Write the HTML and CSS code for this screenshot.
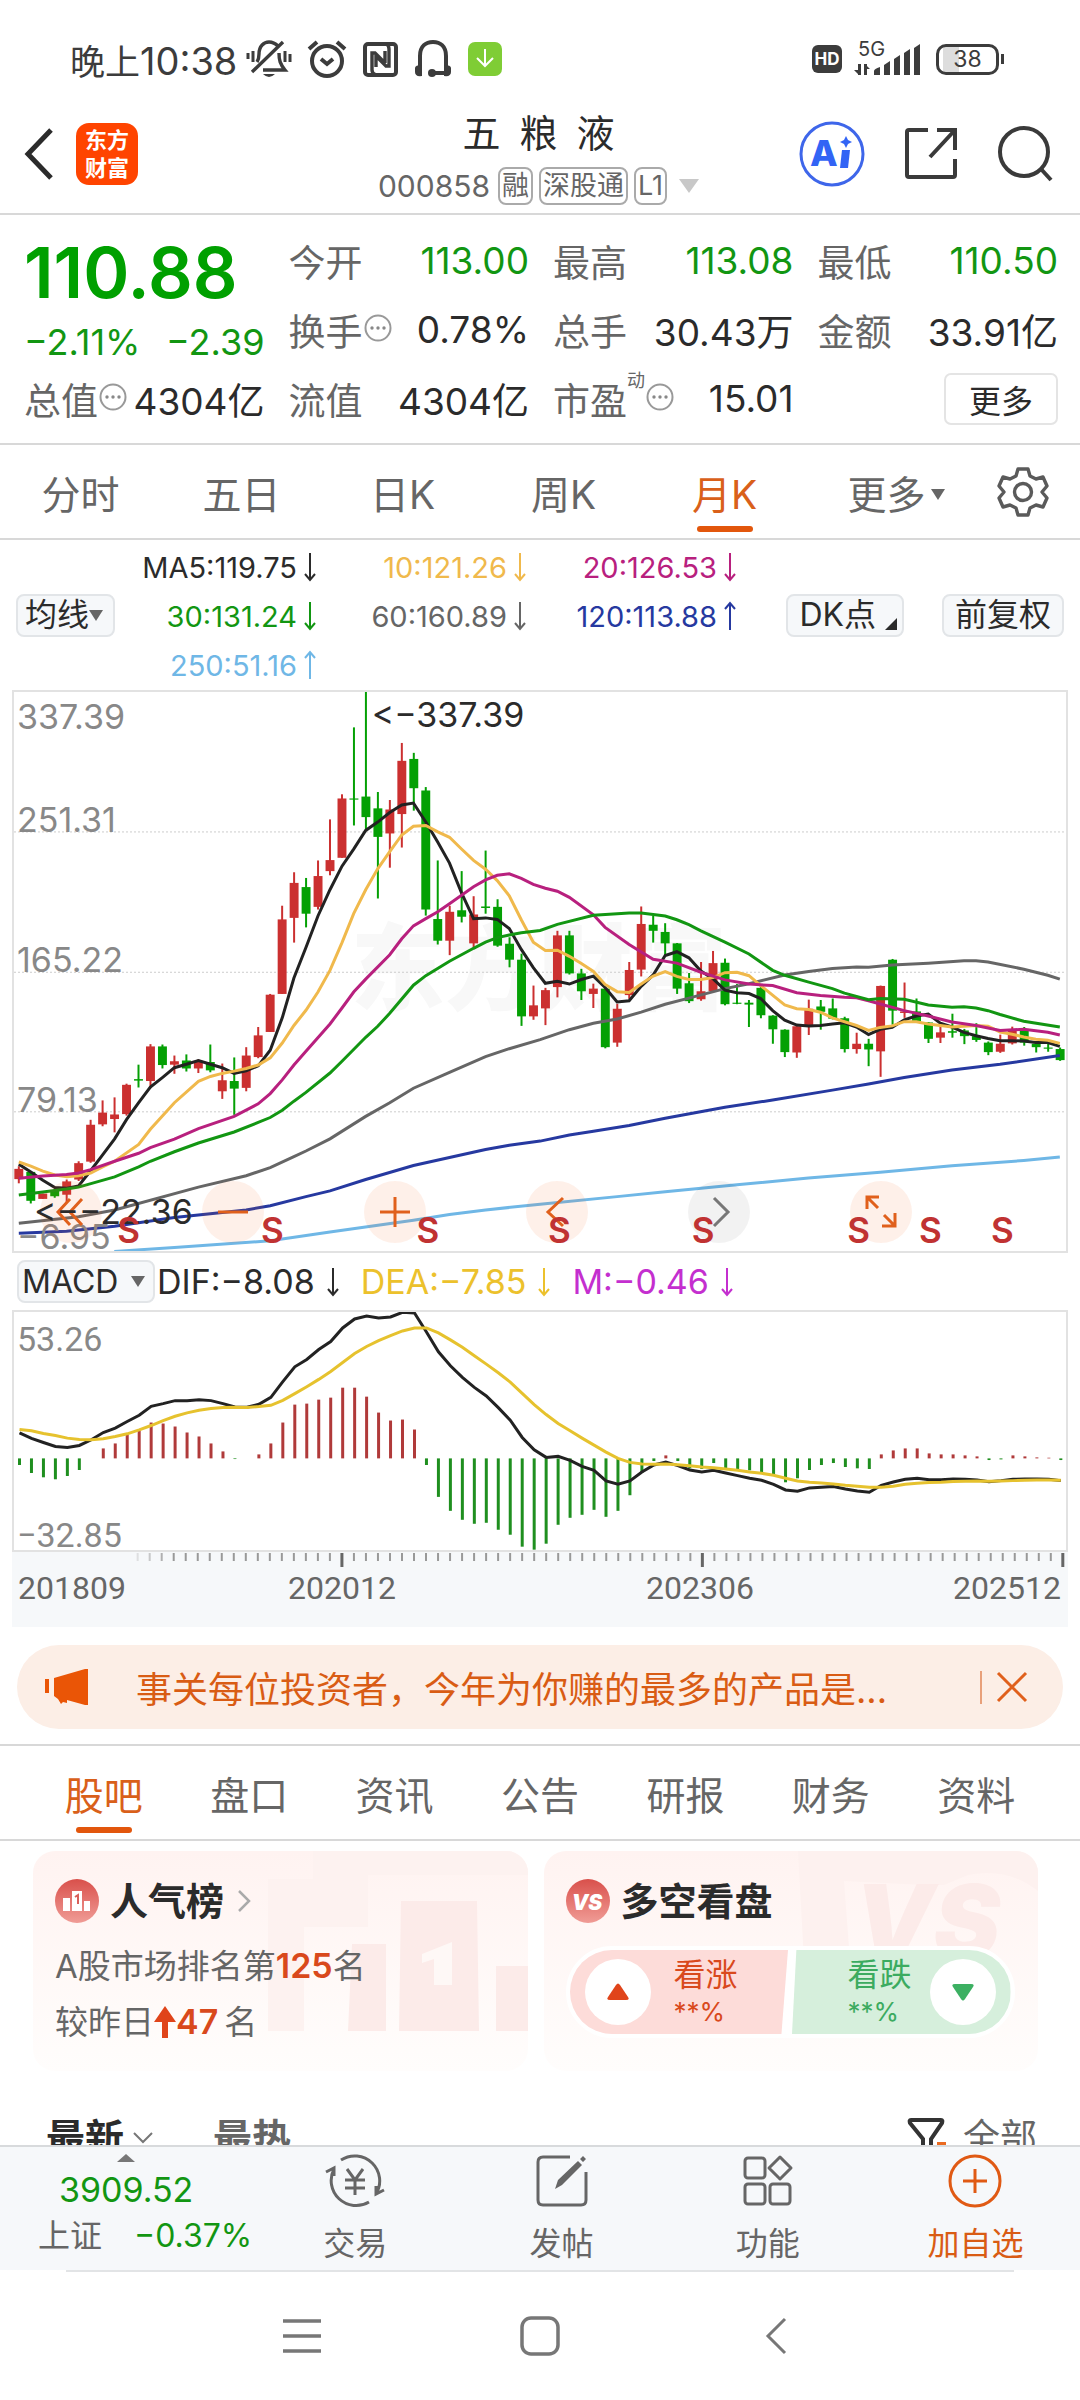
FILE: index.html
```html
<!DOCTYPE html>
<html lang="zh-CN">
<head>
<meta charset="utf-8">
<meta name="viewport" content="width=device-width, initial-scale=1">
<title>五粮液 000858</title>
<link rel="stylesheet" href="styles.css">
</head>
<body>
<svg class="defs" width="0" height="0" aria-hidden="true">
  <symbol id="arrow-down" viewBox="0 0 14 30"><path d="M7 1v26M2 22l5 6 5-6" fill="none" stroke="currentColor" stroke-width="2"/></symbol>
  <symbol id="arrow-up" viewBox="0 0 14 30"><path d="M7 29V3M2 8l5-6 5 6" fill="none" stroke="currentColor" stroke-width="2"/></symbol>
  <symbol id="dots" viewBox="0 0 28 28"><circle cx="14" cy="14" r="12.5" fill="none" stroke="#999" stroke-width="2"/><circle cx="8" cy="14" r="1.7" fill="#888"/><circle cx="14" cy="14" r="1.7" fill="#888"/><circle cx="20" cy="14" r="1.7" fill="#888"/></symbol>
</svg>
<div class="app">
  <div class="status">
    <div class="status-left">
      <span class="clock">晚上<span>10:38</span></span>
      <svg width="46" height="40" viewBox="0 0 46 40" fill="none" stroke="#3c3c3c" stroke-width="3.4"><path d="M11 23c2-3 2-5 2-8 0-8 5-12 10-12 4 0 6 1 9 4M33 14c0 7 1 11 6 17H17M6 33L37 3"/><path d="M17 35h12q-6 6-12 0z" fill="#3c3c3c" stroke="none"/><path d="M2 14v6M7 12v11M44 15v8M39 12v11" stroke-width="3"/></svg>
      <svg width="40" height="40" viewBox="0 0 40 40" fill="none" stroke="#3c3c3c" stroke-width="4"><circle cx="20" cy="22" r="15"/><path d="M14 20l6 5 6-5M2 10l8-7M38 10l-8-7"/></svg>
      <svg width="36" height="38" viewBox="0 0 36 38" fill="none" stroke="#3c3c3c" stroke-width="4"><rect x="3" y="4" width="31" height="31" rx="3"/><path d="M14 35q-4-1-4-5V13h3l10 10M24 4q3 1 3 5v17h-3L14 16v11M23 23V11" stroke-width="3.4"/></svg>
      <svg width="40" height="40" viewBox="0 0 40 40" fill="none" stroke="#3c3c3c" stroke-width="4"><path d="M7 35V17C7 7 13 3 20 3s13 4 13 14v18M20 34h12"/><path d="M2 29q0-3 7-3v11q-7 1-7-4zM38 29q0-3-7-3v11q7 1 7-4z" fill="#3c3c3c" stroke="none"/><circle cx="19" cy="34" r="4" fill="#3c3c3c" stroke="none"/></svg>
      <svg width="34" height="34" viewBox="0 0 34 34"><rect width="34" height="34" rx="7" fill="#7fcd35"/><path d="M17 7v17M9 16l8 8 8-8" fill="none" stroke="#fff" stroke-width="2"/></svg>
    </div>
    <div class="status-right">
      <span class="hd">HD</span>
      <svg class="signal" width="68" height="36" viewBox="0 0 68 36" fill="#3c3c3c"><text x="4" y="15">5G</text><path d="M4 23h3v11H4zM0 29h6l-1 5zM10 23h3v11h-3zM11 23l5 5h-5zM20 30q0-2 6-4v8h-6zM30 24l6-4v14h-6zM40 18l6-4v20h-6zM50 12l6-4v26h-6zM60 7l6-4v31h-6z"/></svg>
      <span class="battery">38</span><i class="battery-tip"></i>
    </div>
  </div>

  <header class="header">
    <div class="header-side">
      <button class="icon-btn" aria-label="返回"><svg width="30" height="54" viewBox="0 0 30 54"><path d="M27 3L4 27l23 24" fill="none" stroke="#2b2b2b" stroke-width="5"/></svg></button>
      <span class="logo">东方<br>财富</span>
    </div>
    <div class="title">
      <h1>五&ensp;粮&ensp;液</h1>
      <div class="sub"><span class="code">000858</span><span class="tag">融</span><span class="tag">深股通</span><span class="tag">L1</span><i class="tri-down big"></i></div>
    </div>
    <div class="header-side right">
      <button class="icon-btn" aria-label="AI"><svg width="66" height="66" viewBox="0 0 66 66"><circle cx="33" cy="33" r="31" fill="none" stroke="#3e66ea" stroke-width="3"/><text x="11" y="45" class="ai">A</text><path d="M43 29h8l-2 18h-8z" fill="#3264f5"/><path d="M47 15l2 4 4 2-4 2-2 4-2-4-4-2 4-2z" fill="#3264f5"/></svg></button>
      <button class="icon-btn" aria-label="分享"><svg width="56" height="56" viewBox="0 0 56 56" fill="none" stroke="#3a3a3a" stroke-width="4"><path d="M25 4H6q-2 0-2 2v43q0 2 2 2h44q2 0 2-2V33M34 4h18v20M52 4L27 31"/></svg></button>
      <button class="icon-btn" aria-label="搜索"><svg width="56" height="56" viewBox="0 0 56 56" fill="none" stroke="#3a3a3a" stroke-width="4"><circle cx="27" cy="26" r="24"/><path d="M44 43l10 11"/></svg></button>
    </div>
  </header>

  <section class="quote">
    <div class="price-block">
      <strong class="price">110.88</strong>
      <div class="change"><span>−2.11%</span><span>−2.39</span></div>
    </div>
    <div class="stat"><span>今开</span><b class="green">113.00</b></div>
    <div class="stat"><span>最高</span><b class="green">113.08</b></div>
    <div class="stat"><span>最低</span><b class="green">110.50</b></div>
    <div class="stat"><span>换手<svg class="dots"><use href="#dots"/></svg></span><b>0.78%</b></div>
    <div class="stat"><span>总手</span><b>30.43万</b></div>
    <div class="stat"><span>金额</span><b>33.91亿</b></div>
    <div class="stat"><span>总值<svg class="dots"><use href="#dots"/></svg></span><b>4304亿</b></div>
    <div class="stat"><span>流值</span><b>4304亿</b></div>
    <div class="stat"><span>市盈<sup>动</sup><svg class="dots"><use href="#dots"/></svg></span><b>15.01</b></div>
    <div class="stat end"><button class="more">更多</button></div>
  </section>

  <nav class="periods">
    <button>分时</button><button>五日</button><button>日K</button><button>周K</button><button class="on">月K</button><button>更多<i class="tri-down"></i></button>
    <button class="gear" aria-label="设置"><svg width="52" height="52" viewBox="0 0 52 52" fill="none" stroke="#5a5a5a" stroke-width="3.4" stroke-linejoin="round"><path d="M21 3h10l2 7 6 3 7-2 4 9-5 6 5 6-4 9-7-2-6 3-2 7H21l-2-7-6-3-7 2-4-9 5-6-5-6 4-9 7 2 6-3z"/><circle cx="26" cy="26" r="8.5"/></svg></button>
  </nav>

  <section class="ma">
    <button class="chip">均线<i class="tri-down"></i></button>
    <div class="ma-grid">
      <span class="c5">MA5:119.75<svg class="arr"><use href="#arrow-down"/></svg></span>
      <span class="c10">10:121.26<svg class="arr"><use href="#arrow-down"/></svg></span>
      <span class="c20">20:126.53<svg class="arr"><use href="#arrow-down"/></svg></span>
      <span class="c30">30:131.24<svg class="arr"><use href="#arrow-down"/></svg></span>
      <span class="c60">60:160.89<svg class="arr"><use href="#arrow-down"/></svg></span>
      <span class="c120">120:113.88<svg class="arr"><use href="#arrow-up"/></svg></span>
      <span class="c250">250:51.16<svg class="arr"><use href="#arrow-up"/></svg></span>
    </div>
    <div class="ma-btns"><button class="chip">DK点<i class="corner"></i></button><button class="chip">前复权</button></div>
  </section>

  <section class="kline">
    <span class="watermark">东方财富</span>
    <svg id="kline" class="plot" viewBox="36 28 3063 1470" preserveAspectRatio="none"></svg>
    <span class="axis a1">337.39</span><span class="axis a2">251.31</span><span class="axis a3">165.22</span><span class="axis a4">79.13</span><span class="axis a5">−6.95</span>
    <div class="tools">
      <button aria-label="最早"><svg viewBox="0 0 62 62"><path d="M30 18L18 31l12 13M42 18L30 31l12 13"/></svg></button>
      <button aria-label="缩小"><svg viewBox="0 0 62 62"><path d="M16 31h30"/></svg></button>
      <button aria-label="放大"><svg viewBox="0 0 62 62"><path d="M16 31h30M31 16v30"/></svg></button>
      <button aria-label="前移"><svg viewBox="0 0 62 62"><path d="M37 17L22 31l15 14"/></svg></button>
      <button aria-label="后移" class="off"><svg viewBox="0 0 62 62"><path d="M26 17l14 14-14 14"/></svg></button>
      <button aria-label="全屏"><svg viewBox="0 0 62 62"><path d="M29 16H17v12M17 16l11 11M45 32v13H32M45 45L34 34"/></svg></button>
    </div>
    <span class="mark high">&lt;−337.39</span><span class="mark low">&lt;−−22.36</span>
    <div id="signals"></div>
  </section>

  <section class="macd-head">
    <button class="chip">MACD<i class="tri-down"></i></button>
    <span>DIF:−8.08<svg class="arr"><use href="#arrow-down"/></svg></span>
    <span class="dea">DEA:−7.85<svg class="arr"><use href="#arrow-down"/></svg></span>
    <span class="m">M:−0.46<svg class="arr"><use href="#arrow-down"/></svg></span>
  </section>
  <section class="macd">
    <svg id="macd" class="plot" viewBox="36 183 3063 717" preserveAspectRatio="none"></svg>
    <span class="axis m1">53.26</span><span class="axis m2">−32.85</span>
  </section>
  <div class="dates">
    <svg id="ticks" viewBox="36 0 3063 16" preserveAspectRatio="none"></svg>
    <div class="date-row"><span>201809</span><span>202012</span><span>202306</span><span>202512</span></div>
  </div>

  <aside class="banner">
    <svg width="44" height="40" viewBox="0 0 44 40" fill="#ea5506"><path d="M0 12h4v14H0zM9 11L40 2h3v36h-3l-18-5v3l-4-1-2 2-3-5-4-3z"/></svg>
    <a href="#">事关每位投资者，今年为你赚的最多的产品是...</a>
    <button aria-label="关闭"><svg width="32" height="32" viewBox="0 0 32 32"><path d="M2 2l28 28M30 2L2 30" stroke="#e0601c" stroke-width="3"/></svg></button>
  </aside>

  <nav class="tabs">
    <button class="on">股吧</button><button>盘口</button><button>资讯</button><button>公告</button><button>研报</button><button>财务</button><button>资料</button>
  </nav>

  <main class="feed">
    <div class="cards">
      <article class="card">
        <svg class="art" width="260" height="220" viewBox="0 0 260 220"><path d="M45 0h215v24H100v52H36v104H0V28h45z" fill="#fdf2f0"/><path d="M84 93h34v87H80zM133 50h76l2 130h-80zM228 115h32v65h-32z" fill="#fcebe9"/><path d="M154 103l30-12v43h-18v-26l-12 4z" fill="#fef8f6"/></svg>
        <h2><svg width="44" height="44" viewBox="0 0 44 44"><defs><linearGradient id="rg" x2="0" y2="1"><stop stop-color="#d9504b"/><stop offset="1" stop-color="#f09c96"/></linearGradient></defs><circle cx="22" cy="22" r="22" fill="url(#rg)"/><path d="M8 19h7v13H8zM17 12h10v20H17zM29 22h6v10h-6z" fill="#fff"/><path d="M20 18l3-2v9" fill="none" stroke="#d9605b" stroke-width="2"/></svg>人气榜<svg class="chev" width="14" height="22" viewBox="0 0 14 22"><path d="M2 1l10 10L2 21" fill="none" stroke="#aaa" stroke-width="2.5"/></svg></h2>
        <p>A股市场排名第<b>125</b>名</p>
        <p>较昨日<svg width="22" height="32" viewBox="0 0 22 32"><path d="M11 0l11 16h-8v16H8V16H0z" fill="#e0441a"/></svg><b>47</b><span class="unit">名</span></p>
      </article>
      <article class="card">
        <svg class="art" width="240" height="110" viewBox="0 0 240 110"><path d="M0 0h240v40q-30-24-70-16l-24 10h-20l-80-4 6 80H6z" fill="#fdf1ef"/><text x="56" y="106" class="vs-art">VS</text></svg>
        <h2><svg width="44" height="44" viewBox="0 0 44 44"><circle cx="22" cy="22" r="22" fill="url(#rg)"/><text x="21" y="31" class="vs">VS</text></svg>多空看盘</h2>
        <div class="vote">
          <button class="up"><i><svg width="22" height="18" viewBox="0 0 22 18"><path d="M9 2q2-3 4 0l8 12q2 3-2 3H3q-4 0-2-3z" fill="#e0441a"/></svg></i><span>看涨<small>**%</small></span></button>
          <button class="down"><span>看跌<small>**%</small></span><i><svg width="22" height="18" viewBox="0 0 22 18"><path d="M9 16q2 3 4 0l8-12q2-3-2-3H3q-4 0-2 3z" fill="#3cb062"/></svg></i></button>
        </div>
      </article>
    </div>
    <div class="sort">
      <button class="on">最新<svg width="20" height="14" viewBox="0 0 20 14"><path d="M1 2l9 9 9-9" fill="none" stroke="#777" stroke-width="2"/></svg></button>
      <button>最热</button>
      <button class="filter"><svg width="42" height="42" viewBox="0 0 42 42"><path d="M4 3h30q2 0 1 3L24 22v17l-8-5V22L3 6q-1-3 1-3z" fill="none" stroke="#333" stroke-width="4"/><path d="M30 27h9" stroke="#ea6a20" stroke-width="4"/></svg>全部</button>
    </div>
  </main>

  <footer class="dock">
    <div class="index"><i class="tri-up"></i><strong>3909.52</strong><div><span>上证</span><em>−0.37%</em></div></div>
    <button><svg width="60" height="54" viewBox="0 0 60 54" fill="none" stroke="#666" stroke-width="3"><path d="M16 6a25 25 0 0 1 35 34M44 48A25 25 0 0 1 9 15M1 18l8-4v8M59 36l-8 4v-8M22 15l8 11 8-11M30 26v15M20 26h20M20 34h20"/></svg>交易</button>
    <button><svg width="60" height="54" viewBox="0 0 60 54" fill="none" stroke="#666" stroke-width="3"><path d="M38 3H11q-5 0-5 5v38q0 5 5 5h38q5 0 5-5V18"/><path d="M23 35l3-9L46 7l4 4-20 20zM48 5l3-3 3 3-3 3z" fill="#666" stroke="none"/></svg>发帖</button>
    <button><svg width="60" height="54" viewBox="0 0 60 54" fill="none" stroke="#666" stroke-width="3"><rect x="7" y="4" width="20" height="20" rx="3"/><path d="M42 3l11 11-11 11-11-11z" stroke-linejoin="round"/><rect x="7" y="30" width="20" height="20" rx="3"/><rect x="32" y="30" width="20" height="20" rx="3"/></svg>功能</button>
    <button class="add"><svg width="60" height="54" viewBox="0 0 60 54" fill="none" stroke="#e05a14" stroke-width="3"><circle cx="30" cy="27" r="25"/><path d="M18 27h24M30 15v24"/></svg>加自选</button>
  </footer>
  <div class="sysnav">
    <button aria-label="菜单"><svg width="38" height="38" viewBox="0 0 38 38"><path d="M0 4h38M0 19h38M0 34h38" stroke="#777" stroke-width="3.5"/></svg></button>
    <button aria-label="主页"><svg width="40" height="40" viewBox="0 0 40 40"><rect x="2" y="2" width="36" height="36" rx="9" fill="none" stroke="#777" stroke-width="3.5"/></svg></button>
    <button aria-label="返回"><svg width="38" height="38" viewBox="0 0 38 38"><path d="M26 2L9 19l17 17" fill="none" stroke="#777" stroke-width="3"/></svg></button>
  </div>
</div>
<script src="chart.js"></script>
</body>
</html>
```
FILE: styles.css
```css
* { box-sizing: border-box; }
body { margin: 0; background: #fff; color: #2b2b2b; font-family: Inter, "Noto Sans CJK SC", sans-serif; }
button { font: inherit; color: inherit; background: none; border: 0; padding: 0; margin: 0; }
svg { display: block; flex: none; }
h1, h2, p { margin: 0; font-weight: 400; }
i, em { font-style: normal; }
a { text-decoration: none; color: inherit; }
.defs { position: absolute; }
.app { height: 100vh; display: flex; flex-direction: column; overflow: hidden; }
.app > * { flex: none; }
.green { color: #129612; }
.tri-down, .tri-up { display: inline-block; border: 7px solid transparent; border-top: 11px solid #666; border-bottom: 0; }
.tri-down.big { border-width: 14px 10px 0; border-top-color: #c8c8c8; margin-left: 6px; }
.tri-up { border: 9px solid transparent; border-top: 0; border-bottom: 8px solid #777; }

.status { height: 108px; padding: 10px 76px 0 70px; display: flex; align-items: center; justify-content: space-between; color: #3c3c3c; }
.status-left, .status-right { display: flex; align-items: center; }
.status-left { gap: 15px; }
.clock { font-size: 35px; margin-right: -6px; white-space: nowrap; }
.clock span { font-size: 38px; }
.hd { background: #3c3c3c; color: #fff; font-size: 17px; font-weight: 700; line-height: 28px; width: 30px; border-radius: 6px; text-align: center; }
.signal { margin: 0 14px 0 12px; font: 20px Inter, sans-serif; }
.battery { width: 63px; height: 31px; border: 3px solid #3c3c3c; border-radius: 10px; font-size: 23px; line-height: 25px; text-align: center; background: linear-gradient(90deg, #fff 4px, #ddd 4px, #ddd 20px, #fff 20px); }
.battery-tip { width: 3px; height: 10px; margin-left: 2px; background: #3c3c3c; }

.header { height: 107px; display: flex; align-items: center; justify-content: space-between; padding: 0 27px 0 24px; border-bottom: 2px solid #d8d8d8; }
.header-side { display: flex; align-items: center; width: 260px; gap: 22px; padding-bottom: 13px; }
.header-side.right { justify-content: flex-end; gap: 38px; }
.logo { width: 62px; height: 62px; border-radius: 13px; background: #ff4400; color: #fff; font-size: 22px; font-weight: 700; line-height: 28px; padding: 3px 0; text-align: center; }
.title { text-align: center; }
.title h1 { font-size: 38px; line-height: 38px; padding-bottom: 12px; }
.sub { display: flex; align-items: center; justify-content: center; gap: 6px; height: 44px; font-size: 30px; color: #666; }
.code { margin-right: 2px; }
.tag { border: 2px solid #aaa; border-radius: 8px; height: 38px; line-height: 34px; padding: 0 2px; font-size: 27px; }
.ai { font: 800 36px Inter, sans-serif; fill: #3264f5; }

.quote { display: grid; grid-template-columns: repeat(4, 1fr); grid-auto-rows: 69px; column-gap: 24px; padding: 11px 22px 11px 24px; height: 230px; border-bottom: 2px solid #d8d8d8; }
.price-block { grid-row: span 2; color: #00a000; display: flex; flex-direction: column; }
.price { font-size: 70px; line-height: 94px; white-space: nowrap; font-weight: 600; }
.change { display: flex; justify-content: space-between; font-size: 36px; line-height: 44px; color: #129612; }
.stat { display: flex; align-items: center; justify-content: space-between; font-size: 37px; color: #666; white-space: nowrap; }
.stat span { display: flex; align-items: center; }
.stat b { font-weight: 400; font-size: 37px; color: #2b2b2b; }
.stat b.green { color: #129612; }
.stat sup { font-size: 18px; line-height: 18px; align-self: flex-start; }
.stat.end { justify-content: flex-end; }
.dots { width: 28px; height: 28px; margin-left: 1px; margin-bottom: 4px; }
.more { width: 114px; height: 52px; border: 2px solid #e4e4e4; border-radius: 7px; font-size: 32px; color: #2b2b2b; }

.periods { display: grid; grid-template-columns: repeat(5, 161fr) 182fr 93fr; height: 95px; border-bottom: 2px solid #d8d8d8; font-size: 39px; color: #666; }
.periods button { position: relative; }
.periods button.gear { display: flex; align-items: center; padding-left: 10px; }
.periods .tri-down { vertical-align: 9px; margin-left: 5px; }
.on { color: #d9601a; }
.periods .on::after, .tabs .on::after { content: ""; position: absolute; left: calc(50% - 28px); bottom: 6px; width: 56px; height: 6px; border-radius: 3px; background: #e2560c; }

.ma { display: flex; align-items: center; height: 150px; padding: 2px 16px 0; }
.chip { height: 43px; border: 2px solid #e2e5e8; border-radius: 8px; background: #f6f8fa; font-size: 32px; line-height: 38px; white-space: nowrap; padding: 0 7px; color: #2b2b2b; display: flex; align-items: center; }
.ma-grid { display: grid; grid-template-columns: 202px 210px 210px; grid-auto-rows: 49px; font-size: 29px; }
.ma-grid span { display: flex; align-items: center; justify-content: flex-end; gap: 6px; white-space: nowrap; }
.ma .chip { width: 99px; margin-bottom: 2px; }
.arr { width: 14px; height: 30px; }
.ma-btns { margin-left: auto; display: flex; gap: 38px; }
.ma-btns .chip { width: auto; padding: 0 11px; }
.corner { border: 6px solid transparent; border-right-color: #2b2b2b; border-bottom-color: #2b2b2b; margin: 18px -6px 0 9px; }
.c10 { color: #f0b94c; } .c20 { color: #b8207e; } .c30 { color: #129612; } .c60 { color: #666; } .c120 { color: #2639a0; } .c250 { color: #6fb7e6; }

.kline { position: relative; height: 563px; margin: 0 12px; border: 2px solid #e2e2e2; }
.plot { position: absolute; inset: 0; width: 100%; height: 100%; overflow: hidden; }
.watermark { position: absolute; left: 32%; top: 212px; font-size: 94px; line-height: 130px; font-weight: 900; color: #f8f8f8; }
.axis { position: absolute; left: 3px; font-size: 34px; line-height: 40px; color: #888; }
.a1 { top: 5px; } .a2 { top: 108px; } .a3 { top: 248px; } .a4 { top: 388px; } .a5 { top: 525px; }
.mark { position: absolute; font-size: 34px; line-height: 42px; white-space: nowrap; }
.high { left: 34%; top: 2px; } .low { left: 20px; top: 499px; }
.tools { position: absolute; left: 26px; top: 489px; display: flex; gap: 100px; }
.tools button { width: 62px; height: 62px; border-radius: 50%; background: rgba(250, 110, 40, .1); }
.tools path { fill: none; stroke: #e0601c; stroke-width: 3; }
.tools .off { background: rgba(0, 0, 0, .05); }
.tools .off path { stroke: #777; }
.sig { position: absolute; top: 517px; width: 24px; margin-left: -12px; text-align: center; font-size: 35px; line-height: 42px; font-weight: 600; color: #c03232; }

.macd-head { height: 57px; padding: 0 17px; display: flex; align-items: center; font-size: 34px; white-space: nowrap; }
.macd-head .chip { width: 138px; justify-content: space-between; padding: 0 8px 0 3px; margin-right: 2px; }
.macd-head span { display: flex; align-items: center; gap: 11px; margin-right: 21px; }
.macd-head .arr { height: 34px; }
.macd-head .dea { color: #ecc12c; } .macd-head .m { color: #c42fcf; }
.macd { position: relative; height: 242px; margin: 0 12px; border: 2px solid #e2e2e2; }
.macd .axis, .date-row { font-family: Roboto, sans-serif; }
.m1 { top: 7px; } .m2 { bottom: -5px; }
.dates { margin: 0 12px; height: 75px; background: #f6f8fa; }
.dates svg { width: 100%; height: 16px; }
.date-row { display: grid; grid-template-columns: 270fr 358fr 307fr 115fr; padding-left: 6px; font-size: 32px; line-height: 40px; color: #666; }

.banner { margin: 18px 17px 15px; height: 84px; border-radius: 42px; background: #fceee6; display: flex; align-items: center; padding: 0 35px 0 28px; color: #d95c14; }
.banner a { flex: 1; margin-left: 47px; font-size: 36px; white-space: nowrap; }
.banner button { border-left: 2px solid #e8a07a; height: 33px; padding-left: 14px; }

.tabs { display: flex; height: 97px; padding: 0 31px; border-top: 2px solid #d8d8d8; border-bottom: 2px solid #d8d8d8; font-size: 39px; color: #666; }
.tabs button { flex: 1; position: relative; }

.app > .feed { flex: 1; min-height: 0; overflow: hidden; }
.cards { display: grid; grid-template-columns: 1fr 1fr; gap: 16px; padding: 10px 42px 0 33px; }
.card { position: relative; height: 220px; border-radius: 22px; background: linear-gradient(#fff3f1, #fffdfc); padding: 22px 22px 0; overflow: hidden; }
.art { position: absolute; right: 0; top: 0; }
.card h2 { position: relative; display: flex; align-items: center; gap: 11px; font-size: 38px; line-height: 56px; font-weight: 700; }
.chev { margin-left: 2px; }
.card p { position: relative; display: flex; align-items: center; font-size: 33px; line-height: 56px; color: #666; white-space: nowrap; }
.card h2 + p { margin-top: 9px; }
.card p b { color: #d9491c; font-size: 34px; font-weight: 600; }
.unit { margin-left: 6px; }
.vs { font: italic 900 21px Inter, sans-serif; fill: #fff; text-anchor: middle; }
.vs-art { font: italic 900 100px Inter, sans-serif; fill: #fcebe9; }
.vote { position: relative; display: flex; gap: 4px; height: 92px; width: 449px; margin-top: 17px; border: 4px solid #fff; border-radius: 46px; overflow: hidden; background: #fff; }
.vote button { flex: 1; display: flex; align-items: center; gap: 23px; font-size: 32px; line-height: 40px; text-align: left; padding: 0 15px; }
.vote i { width: 66px; height: 66px; border-radius: 50%; background: #fff; display: flex; align-items: center; justify-content: center; }
.vote small { font-size: 26px; line-height: 34px; display: block; }
.up { background: #fddcd9; color: #d9491c; clip-path: polygon(0 0, 100% 0, 97% 100%, 0 100%); }
.vote .down { background: #d6efdc; color: #3cab60; justify-content: flex-end; gap: 18px; clip-path: polygon(2% 0, 100% 0, 100% 100%, 0 100%); }
.sort { display: flex; padding: 39px 43px 0 46px; font-size: 39px; line-height: 56px; font-weight: 700; color: #666; }
.sort button { display: flex; align-items: center; gap: 9px; margin-right: 60px; }
.sort .on { color: #2b2b2b; }
.sort .filter { margin: 0 0 0 auto; font-weight: 400; font-size: 37px; gap: 14px; }

.dock { height: 125px; display: flex; border-top: 2px solid #d8dadc; background: #f6f8fa; color: #666; font-size: 32px; }
.dock button { flex: 206; display: flex; flex-direction: column; align-items: center; padding-top: 7px; line-height: 44px; gap: 14px; }
.dock .add { color: #d95c14; flex: 209; }
.index { flex: 252; display: flex; flex-direction: column; align-items: center; padding-top: 7px; }
.index strong { font-weight: 400; font-size: 34px; line-height: 56px; color: #129612; }
.index em { color: #129612; }
.index > div { display: flex; width: 100%; justify-content: space-between; padding-left: 38px; font-size: 32px; line-height: 36px; }
.sysnav { height: 130px; margin: 0 66px; border-top: 2px solid #e2e4e6; display: flex; justify-content: center; align-items: center; gap: 199px; }
```
FILE: chart.js
```js
const STEP = 34.85;

// One row per month: up/down, body top, body bottom, wick top, wick bottom
const candles = `r 1282 1309 1275 1320|g 1290 1366 1290 1373|r 1347 1361 1347 1361|g 1339 1354 1335 1358|r 1315 1350 1310 1370|r 1267 1310 1262 1314|r 1166 1263 1153 1266|r 1134 1165 1102 1170|r 1139 1151 1094 1186|r 1061 1138 1058 1142|g 1046 1050 1008 1068|r 960 1051 954 1070|g 960 1009 955 1018|r 999 1008 984 1032|g 997 1018 981 1026|r 998 1018 994 1030|g 1001 1023 955 1028|r 1049 1078 1005 1098|g 1051 1071 989 1140|r 984 1069 962 1078|r 931 988 909 991|r 824 922 822 922|r 626 822 590 822|r 530 622 502 687|g 541 611 517 647|r 512 593 471 600|r 470 499 363 510|r 308 464 297 464|g 308 311 121 379|g 303 357 28 390|g 334 409 291 571|r 337 400 312 490|r 209 349 162 437|g 204 281 188 340|g 287 600 278 616|g 625 682 471 692|r 606 682 590 720|g 602 619 499 634|r 613 689 565 700|g 592 596 445 611|g 593 695 573 698|g 690 732 673 752|g 732 881 716 906|r 852 881 800 890|r 812 860 806 904|r 668 804 656 831|g 668 768 656 771|g 768 815 756 838|r 808 822 795 859|g 808 962 808 965|r 861 950 848 961|r 759 825 738 835|r 638 758 592 776|g 640 656 617 687|g 659 689 636 720|g 689 808 688 822|g 794 841 767 846|r 815 836 738 840|r 741 815 709 818|g 740 849 729 852|g 845 848 796 849|g 845 850 838 909|g 806 878 800 886|g 879 915 878 953|g 916 975 915 988|r 907 976 903 990|r 861 904 837 930|g 855 869 838 916|g 860 887 834 889|g 886 967 882 976|r 953 967 924 979|g 953 968 940 1012|r 801 973 800 1040|g 732 866 730 903|r 868 872 792 885|g 868 896 834 898|g 897 940 896 951|r 923 937 908 951|g 920 924 874 937|g 918 933 914 954|g 933 943 899 948|g 950 975 947 983|r 953 974 929 977|r 915 952 908 955|g 915 950 909 958|g 953 962 948 976|g 963 966 952 974|g 967 996 963 998`
  .split('|').map(row => row.split(' '));

const averages = [
  ['#6fb7e6', '328,1499 503,1489 782,1471 956,1448 1199,1417 1304,1402 1409,1390 1568,1375 1792,1355 1932,1342 2141,1324 2349,1306 2558,1291 2767,1274 2976,1260 3081,1251'],
  ['#2639a0', '50,1451 189,1446 329,1433 503,1410 712,1390 782,1379 886,1355 956,1340 1060,1310 1199,1273 1304,1252 1409,1231 1478,1220 1568,1209 1653,1193 1723,1183 1827,1168 1932,1149 2106,1120 2245,1101 2419,1075 2524,1059 2628,1042 2767,1022 2907,1007 3081,984'],
  ['#666', '50,1425 224,1408 329,1390 573,1330 712,1300 782,1279 851,1250 886,1235 956,1203 1060,1144 1130,1108 1199,1070 1304,1028 1409,987 1478,966 1568,942 1653,916 1723,899 1792,888 1862,870 1932,849 2001,833 2106,808 2176,795 2280,772 2350,763 2419,755 2489,751 2524,752 2593,746 2698,741 2802,735 2837,735 2872,738 2976,757 3046,773 3081,783'],
  ['#222', '50,1270 85,1290 120,1312 155,1331 190,1333 224,1327 259,1287 294,1245 329,1203 364,1152 399,1108 433,1067 468,1042 503,1016 538,1007 573,997 608,1007 642,1016 677,1031 712,1024 747,1011 782,970 817,885 851,780 886,700 921,617 956,548 991,486 1025,441 1060,392 1095,370 1130,345 1165,325 1199,320 1235,370 1270,423 1304,478 1339,556 1374,624 1409,622 1443,626 1478,650 1513,705 1548,753 1583,794 1618,789 1653,796 1688,784 1723,775 1757,805 1792,843 1827,840 1862,802 1897,772 1932,721 1966,711 2001,727 2036,762 2071,782 2106,812 2141,819 2176,821 2210,834 2245,866 2280,891 2315,904 2350,906 2384,905 2419,901 2454,898 2489,909 2524,929 2558,915 2593,910 2628,890 2663,880 2698,875 2733,899 2767,909 2802,923 2837,932 2872,939 2907,945 2942,945 2976,946 3011,950 3046,950 3081,960'],
  ['#f0b94c', '50,1264 85,1275 120,1288 155,1298 190,1303 224,1300 259,1293 294,1277 329,1262 399,1218 433,1178 503,1108 573,1052 608,1039 642,1031 677,1025 712,1018 747,1009 782,990 817,951 851,905 886,865 921,817 956,760 991,687 1025,611 1060,548 1095,493 1130,448 1165,404 1199,381 1235,379 1270,396 1304,410 1339,441 1374,471 1409,494 1443,524 1478,564 1513,627 1548,686 1583,708 1618,707 1653,723 1688,742 1723,763 1757,797 1792,816 1827,818 1862,796 1897,775 1932,763 1966,776 2001,784 2036,784 2071,779 2106,766 2141,765 2176,774 2210,800 2280,851 2315,861 2350,863 2384,870 2419,885 2489,905 2524,918 2558,910 2593,906 2628,895 2663,895 2698,901 2767,909 2837,905 2872,907 2907,922 2942,928 2976,935 3011,941 3046,944 3081,952'],
  ['#b8207e', '50,1307 120,1301 189,1297 224,1293 259,1284 329,1262 399,1241 433,1226 503,1204 573,1176 677,1144 747,1111 782,1084 817,1048 851,1009 886,973 956,901 991,859 1025,817 1060,783 1130,719 1165,677 1199,643 1235,624 1270,606 1304,585 1374,540 1409,522 1443,510 1478,506 1513,518 1548,534 1583,544 1618,552 1653,568 1723,614 1757,647 1827,692 1897,731 1966,741 2036,765 2106,785 2176,796 2245,800 2315,819 2384,826 2454,831 2489,832 2524,840 2628,866 2698,880 2767,896 2837,905 2907,918 2976,915 3011,919 3046,923 3081,930'],
  ['#129612', '50,1351 120,1343 189,1335 224,1330 329,1303 399,1277 433,1262 503,1237 573,1214 677,1185 747,1160 782,1147 817,1128 851,1104 886,1081 956,1030 991,999 1060,936 1095,907 1130,873 1199,799 1235,774 1304,736 1374,702 1409,686 1443,674 1478,667 1513,661 1568,655 1618,639 1723,615 1827,609 1862,609 1932,617 1966,627 2001,640 2036,656 2106,686 2176,717 2245,760 2280,773 2350,791 2419,808 2454,820 2524,837 2558,834 2628,836 2698,851 2767,857 2802,856 2837,859 2872,866 2907,876 2976,894 3081,909']
];

const line = (points, color) =>
  `<polyline points="${points}" fill="none" stroke="${color}" stroke-width="3" vector-effect="non-scaling-stroke"/>`;

const grid = [396, 765, 1132].map(y =>
  `<path d="M36 ${y}H3099" stroke="#ccc" stroke-dasharray="2 2" vector-effect="non-scaling-stroke"/>`).join('');

document.getElementById('kline').innerHTML = grid + candles.map(([kind, top, bottom, high, low], i) => {
  const x = 50 + i * STEP;
  const color = kind === 'r' ? '#cb3030' : '#04a004';
  return `<path d="M${x} ${high}V${low}" stroke="${color}" stroke-width="2" vector-effect="non-scaling-stroke"/>` +
    `<rect x="${x - 13}" y="${top}" width="26" height="${bottom - top}" fill="${color}"/>`;
}).join('') + averages.map(([color, points]) => line(points, color)).join('');

// Months that carry an "S" marker
document.getElementById('signals').innerHTML = [9, 21, 34, 45, 57, 70, 76, 82].map(i =>
  `<span class="sig" style="left:${((20 + i * STEP) / 3063 * 100).toFixed(2)}%">S</span>`).join('');

const bars = [644,668,681,687,677,659,624,594,579,552,540,516,519,528,546,558,579,603,626,624,612,579,516,462,459,447,441,411,411,438,486,510,507,537,644,740,782,809,821,818,839,854,890,899,881,824,803,794,779,800,782,735,668,632,615,632,654,656,638,654,658,660,666,676,696,684,659,644,638,650,654,656,612,600,594,594,609,612,612,615,618,629,627,615,618,621,622,629];
const dif = [547,564,576,588,591,585,568,546,533,513,494,467,459,450,450,447,450,459,469,470,461,440,393,348,326,296,272,231,204,195,201,198,184,186,243,303,345,380,410,436,471,509,561,598,621,618,630,648,660,692,702,692,665,644,635,646,659,665,660,668,676,684,690,702,719,723,713,711,709,716,722,726,705,695,687,684,688,688,686,687,689,694,691,687,686,686,687,691];
const dea = [537,541,549,555,563,567,568,565,558,550,538,525,510,497,487,479,474,471,470,471,468,464,449,429,408,386,362,335,308,287,269,254,240,231,231,246,267,289,315,340,366,394,428,462,492,519,541,563,584,605,624,636,641,642,641,643,646,650,652,656,660,665,669,675,684,692,696,698,701,705,708,711,711,708,702,699,697,696,694,693,692,693,692,691,690,689,689,690];
const series = values => values.map((y, i) => `${52 + i * STEP},${y}`).join(' ');

document.getElementById('macd').innerHTML = bars.map((y, i) =>
  `<path d="M${52 + i * STEP} 624V${y}" stroke="${y < 624 ? '#b03a3a' : '#1f8f1f'}" stroke-width="3" vector-effect="non-scaling-stroke"/>`
).join('') + line(series(dif), '#222') + line(series(dea), '#e6c22e');

let ticks = '';
for (let i = 10; i < 88; i++) {
  const major = i % 30 === 27;
  const opacity = Math.min(1, (i - 9) / 4);
  ticks += `<path d="M${52 + i * STEP} 1V${major ? 15 : 9}" stroke="${major ? '#666' : '#999'}" stroke-width="${major ? 3 : 2}" opacity="${opacity}" vector-effect="non-scaling-stroke"/>`;
}
document.getElementById('ticks').innerHTML = ticks;
```
